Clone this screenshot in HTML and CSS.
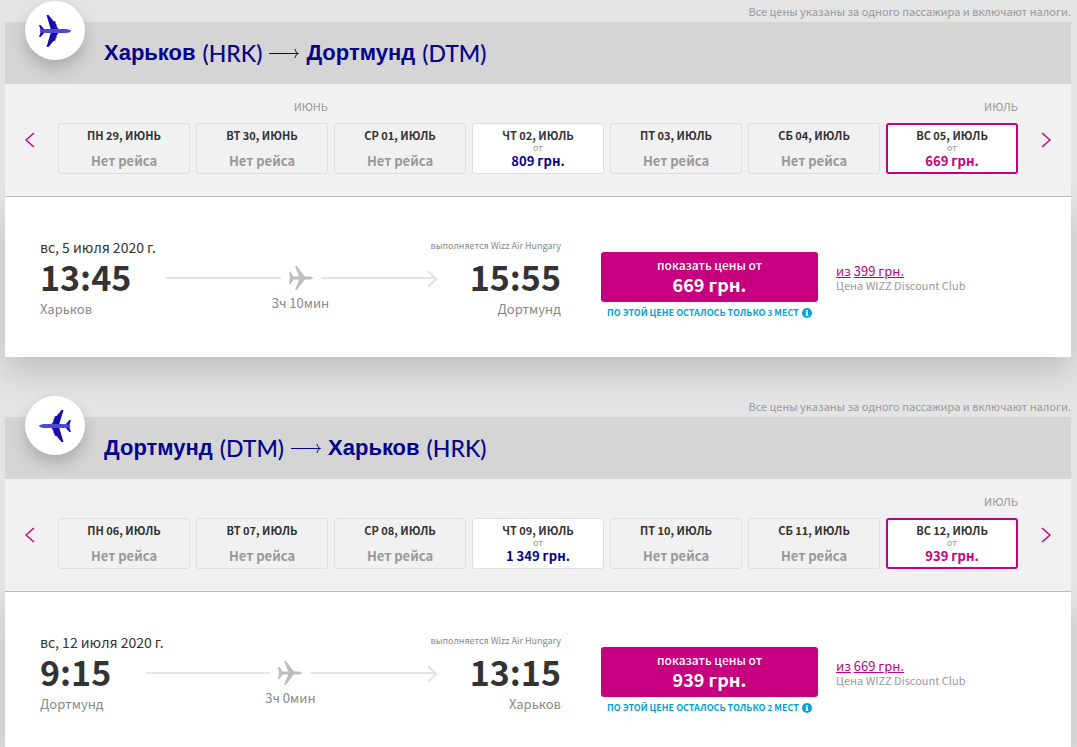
FILE: index.html
```html
<!DOCTYPE html>
<html lang="ru">
<head>
    <meta charset="UTF-8">
    <meta name="viewport" content="width=device-width, initial-scale=1.0">
    <title>Выбор рейса</title>
    <link rel="stylesheet" href="styles.css">
</head>
<body>
    <!-- shared icons -->
    <svg class="sprite" aria-hidden="true">
        <symbol id="plane" viewBox="0 0 34 34">
            <path fill="#1a0dab" d="M8.500 1h2l5 6 2 .5v2l1 .5v2l2.500 4H13zM8.500 33h2l5-6 2-.5v-2l1-.5v-2l2.500-4H13zM1 11h1.500l4 4.500v3l-4 4.500H1l2-6z"/>
            <path fill="#4a49d8" d="M2 16l6-1h19c3 0 6 1 6 2s-3 2-6 2H8l-6-1z"/>
        </symbol>
        <symbol id="plane-small" viewBox="0 0 24 24">
            <path fill="#bdbdbd" d="M0 6h1.500l3 4.500h5.700L6 0h1.800l8 10.500H20c2 0 4 .6 4 1.500s-2 1.500-4 1.500h-4.200l-8 10.500H6l4.200-10.500H4.500l-3 4.500H0l1-6z"/>
        </symbol>
        <symbol id="chevron" viewBox="0 0 10 16">
            <path fill="none" stroke="#c6007e" stroke-width="1.500" d="M1 1l8 7-8 7"/>
        </symbol>
        <symbol id="arrow" viewBox="0 0 30 12">
            <path fill="none" stroke="#06038d" d="M0 6.500h29M26 2c.5 2.500 1.500 4 3.500 4.500-2 .5-3 2-3.500 4.500"/>
        </symbol>
        <symbol id="info" viewBox="0 0 10 10">
            <circle cx="5" cy="5" r="5" fill="#00a3d9"/>
            <path fill="#fff" d="M4 2h2v1.400H4zM3.500 4.200H6v3h.6V8H3.500v-.8H4V5h-.5z"/>
        </symbol>
    </svg>

    <section class="flight">
        <p class="note">Все цены указаны за одного пассажира и включают налоги.</p>
        <div class="badge"><svg><use href="#plane"/></svg></div>
        <div class="card">
            <h2 class="title">Харьков <span>(HRK)</span> <svg><use href="#arrow"/></svg> Дортмунд <span>(DTM)</span></h2>
            <div class="calendar">
                <button type="button" class="nav prev" aria-label="Назад"><svg><use href="#chevron"/></svg></button>
                <div class="days">
                    <span class="month first">июнь</span>
                    <span class="month last">июль</span>
                    <button type="button" class="day" disabled><b>пн 29, июнь</b><span class="price">Нет рейса</span></button>
                    <button type="button" class="day" disabled><b>вт 30, июнь</b><span class="price">Нет рейса</span></button>
                    <button type="button" class="day" disabled><b>ср 01, июль</b><span class="price">Нет рейса</span></button>
                    <button type="button" class="day available"><b>чт 02, июль</b><small>от</small><span class="price">809 грн.</span></button>
                    <button type="button" class="day" disabled><b>пт 03, июль</b><span class="price">Нет рейса</span></button>
                    <button type="button" class="day" disabled><b>сб 04, июль</b><span class="price">Нет рейса</span></button>
                    <button type="button" class="day selected"><b>вс 05, июль</b><small>от</small><span class="price">669 грн.</span></button>
                </div>
                <button type="button" class="nav next" aria-label="Вперёд"><svg><use href="#chevron"/></svg></button>
            </div>
            <div class="details">
                <div class="itinerary">
                    <div class="top">
                        <span class="date">вс, 5 июля 2020 г.</span>
                        <span class="carrier">выполняется Wizz Air Hungary</span>
                    </div>
                    <div class="times">
                        <div class="stop"><span class="time">13:45</span><span class="city">Харьков</span></div>
                        <div class="route">
                            <div class="track"><i class="line"></i><svg><use href="#plane-small"/></svg><i class="line end"></i></div>
                            <span class="duration">3ч 10мин</span>
                        </div>
                        <div class="stop arrival"><span class="time">15:55</span><span class="city">Дортмунд</span></div>
                    </div>
                </div>
                <div class="fare">
                    <button type="button" class="show">показать цены от <strong>669 грн.</strong></button>
                    <p class="seats"><span>по этой цене осталось только <small>3</small> мест</span> <svg><use href="#info"/></svg></p>
                </div>
                <div class="club">
                    <a href="#">из</a> <a href="#">399 грн.</a>
                    <p>Цена WIZZ Discount Club</p>
                </div>
            </div>
        </div>
    </section>

    <section class="flight">
        <p class="note">Все цены указаны за одного пассажира и включают налоги.</p>
        <div class="badge back"><svg><use href="#plane"/></svg></div>
        <div class="card">
            <h2 class="title">Дортмунд <span>(DTM)</span> <svg><use href="#arrow"/></svg> Харьков <span>(HRK)</span></h2>
            <div class="calendar">
                <button type="button" class="nav prev" aria-label="Назад"><svg><use href="#chevron"/></svg></button>
                <div class="days">
                    <span class="month last">июль</span>
                    <button type="button" class="day" disabled><b>пн 06, июль</b><span class="price">Нет рейса</span></button>
                    <button type="button" class="day" disabled><b>вт 07, июль</b><span class="price">Нет рейса</span></button>
                    <button type="button" class="day" disabled><b>ср 08, июль</b><span class="price">Нет рейса</span></button>
                    <button type="button" class="day available"><b>чт 09, июль</b><small>от</small><span class="price">1 349 грн.</span></button>
                    <button type="button" class="day" disabled><b>пт 10, июль</b><span class="price">Нет рейса</span></button>
                    <button type="button" class="day" disabled><b>сб 11, июль</b><span class="price">Нет рейса</span></button>
                    <button type="button" class="day selected"><b>вс 12, июль</b><small>от</small><span class="price">939 грн.</span></button>
                </div>
                <button type="button" class="nav next" aria-label="Вперёд"><svg><use href="#chevron"/></svg></button>
            </div>
            <div class="details">
                <div class="itinerary">
                    <div class="top">
                        <span class="date">вс, 12 июля 2020 г.</span>
                        <span class="carrier">выполняется Wizz Air Hungary</span>
                    </div>
                    <div class="times">
                        <div class="stop"><span class="time">9:15</span><span class="city">Дортмунд</span></div>
                        <div class="route">
                            <div class="track"><i class="line"></i><svg><use href="#plane-small"/></svg><i class="line end"></i></div>
                            <span class="duration">3ч 0мин</span>
                        </div>
                        <div class="stop arrival"><span class="time">13:15</span><span class="city">Харьков</span></div>
                    </div>
                </div>
                <div class="fare">
                    <button type="button" class="show">показать цены от <strong>939 грн.</strong></button>
                    <p class="seats"><span>по этой цене осталось только <small>2</small> мест</span> <svg><use href="#info"/></svg></p>
                </div>
                <div class="club">
                    <a href="#">из</a> <a href="#">669 грн.</a>
                    <p>Цена WIZZ Discount Club</p>
                </div>
            </div>
        </div>
    </section>
</body>
</html>
```
FILE: styles.css
```css
* { box-sizing: border-box; }
body { margin: 0; padding: 0 6px 0 5px; background: #e4e4e4; color: #333; font: 13px/20px "Noto Sans CJK SC", "Noto Sans", sans-serif; }
p { margin: 0; }
button { padding: 0; border: none; font: inherit; cursor: pointer; }
svg { display: block; }
.sprite { position: absolute; width: 0; height: 0; }

.flight { position: relative; margin-bottom: 38px; }
.note { padding-top: 1px; height: 22px; text-align: right; font-size: 11px; color: #999; }
.badge { position: absolute; left: 20px; top: 1px; width: 60px; height: 59px; display: flex; align-items: center; justify-content: center; border-radius: 50%; background: #fff; box-shadow: 0 8px 16px rgba(0,0,0,0.2); }
.badge svg { width: 34px; height: 34px; }
.badge.back svg { transform: scaleX(-1); }

.title { display: flex; align-items: center; gap: 7px; height: 62px; margin: 0; padding-left: 99px; background: #d5d5d5; color: #06038d; font: bold 22px/28px "Liberation Sans", Arial, sans-serif; }
.title span { font-family: Lato, sans-serif; font-weight: 500; font-size: 23px; }
.title svg { width: 30px; height: 12px; }

.calendar { position: relative; display: grid; grid-template-columns: 53px 1fr 53px; height: 113px; padding-top: 13px; background: #f1f1f1; border-bottom: 1px solid #bbb; }
.days { display: grid; grid-template-columns: repeat(7, 1fr); grid-template-rows: 20px 51px; gap: 6px; }
.month { grid-row: 1; text-align: right; font-size: 11px; line-height: 18px; text-transform: uppercase; color: #999; }
.month.first { grid-column: 2; }
.month.last { grid-column: 7; }
.day { grid-row: 2; display: flex; flex-direction: column; align-items: center; justify-content: space-between; padding: 3px 0 4px; border: 1px solid #dedede; border-radius: 3px; background: #f1f1f1; color: #999; line-height: 16px; }
.day b { font-size: 11px; text-transform: uppercase; color: #333; }
.day small { font-size: 9px; line-height: 8px; color: #999; }
.day .price { font-weight: bold; }
.day.available { background: #fff; color: #06038d; }
.day.selected { padding: 2px 0 3px; background: #fff; border: 2px solid #c6007e; color: #c6007e; }
.nav { display: flex; align-items: center; height: 86px; background: none; }
.nav svg { width: 10px; height: 16px; }
.prev { padding-left: 20px; }
.prev svg { transform: scaleX(-1); }
.next { justify-content: flex-end; padding-right: 20px; }

.details { display: grid; grid-template-columns: 561fr 217px 218fr; height: 160px; padding: 40px 35px 0; background: #fff; box-shadow: 0 15px 30px rgba(0,0,0,0.16); }
.itinerary { margin-right: 40px; }
.top { display: flex; justify-content: space-between; line-height: 20px; }
.date { font-size: 14px; }
.carrier { font-size: 9px; line-height: 18px; color: #888; }
.times { display: flex; }
.stop { display: flex; flex-direction: column; gap: 3px; }
.arrival { align-items: flex-end; }
.time { font-size: 34px; font-weight: bold; line-height: 39px; }
.city { color: #888; }
.route { flex: 1; margin: 0 35px; text-align: center; color: #888; }
.track { display: flex; align-items: center; gap: 8px; height: 42px; }
.track svg { width: 24px; height: 24px; }
.line { position: relative; flex: 1; height: 2px; background: #e4e4e4; }
.line.end::after { content: ""; position: absolute; right: 0; top: -4px; width: 10px; height: 10px; border: solid #e4e4e4; border-width: 2px 2px 0 0; transform: rotate(45deg); }
.duration { display: block; line-height: 8px; }

.fare { padding-top: 15px; }
.show { display: flex; flex-direction: column; align-items: center; justify-content: center; width: 100%; height: 50px; padding-bottom: 4px; border-radius: 3px; background: #c6007e; color: #fff; font-size: 12px; font-weight: 500; line-height: 18px; }
.show strong { font-size: 18px; font-weight: bold; line-height: 20px; }
.seats { display: flex; align-items: center; justify-content: center; gap: 3px; font-size: 9px; font-weight: bold; line-height: 22px; text-transform: uppercase; color: #00a3d9; }
.seats small { font-size: 8px; }
.seats svg { width: 10px; height: 10px; }
.club { padding: 26px 0 0 18px; line-height: 15px; }
.club a { color: #c6007e; }
.club p { font-size: 11px; color: #999; }
```
